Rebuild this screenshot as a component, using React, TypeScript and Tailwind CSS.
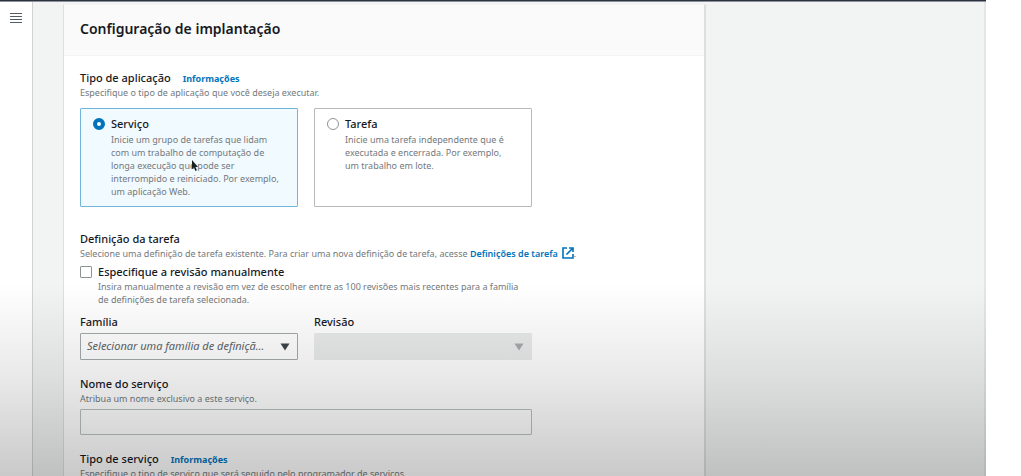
import type { ReactNode } from "react";

function InfoLink() {
  return (
    <a href="#info" className="ml-3 text-[9px] font-bold text-[#0073bb]">
      Informações
    </a>
  );
}

function Heading({ children, info = false }: { children: ReactNode; info?: boolean }) {
  return (
    <div className="h-4 text-[11px] leading-4 font-medium whitespace-nowrap">
      {children}
      {info && <InfoLink />}
    </div>
  );
}

function Description({ children }: { children: ReactNode }) {
  return <p className="text-[9px] leading-[13px] text-[#73797d]">{children}</p>;
}

interface TileProps {
  id: string;
  title: string;
  checked?: boolean;
  children: ReactNode;
}

function Tile({ id, title, checked, children }: TileProps) {
  return (
    <label
      htmlFor={id}
      className="relative flex min-h-[99px] gap-1.5 rounded-[1px] border border-[#b5b9bb] bg-white pt-[7px] pr-4 pb-2 pl-3 has-checked:border-[#72b5d8] has-checked:bg-[#f1faff]"
    >
      <input
        id={id}
        type="radio"
        name="application-type"
        defaultChecked={checked}
        className="mt-0.5 size-3 shrink-0 appearance-none rounded-full border border-[#8d9496] bg-white checked:border-4 checked:border-[#0073bb]"
      />
      <span className="min-w-0">
        <span className="block text-[11px] leading-4 font-medium">{title}</span>
        <span className="mt-px block text-[9px] leading-[13px] text-[#73797d]">{children}</span>
      </span>
      {checked && (
        <svg viewBox="0 0 8 12" className="absolute top-[51px] left-[110px] h-3 w-2" aria-hidden="true">
          <path d="M1 0v9l2-1.6L4.4 11l1.5-.7L4.5 7H7z" fill="#1c2126" />
        </svg>
      )}
    </label>
  );
}

function Caret({ className }: { className: string }) {
  return (
    <svg viewBox="0 0 10 8" className={`pointer-events-none absolute top-[10px] right-2 h-2 w-2.5 ${className}`} aria-hidden="true">
      <path d="M.5.5h9L5 7.5z" fill="currentColor" />
    </svg>
  );
}

export default function App() {
  return (
    <div className="h-screen overflow-hidden bg-white pr-[35px] font-['Noto_Sans','Open_Sans',sans-serif] text-[#16191f]">
      <div className="relative flex h-full flex-col">
        <div className="h-0.5 shrink-0 border-b border-[#8b909c] bg-[#2c333f]" />
        <div className="flex min-h-0 flex-1">
          <aside className="w-[33px] shrink-0 border-r border-[#ced3d4] bg-white pt-2.5 pl-2.5">
            <button type="button" aria-label="Menu" className="flex h-3 w-3 flex-col justify-between py-px">
              <span className="h-px w-full bg-[#545b64]" />
              <span className="h-px w-full bg-[#545b64]" />
              <span className="h-px w-full bg-[#545b64]" />
              <span className="h-px w-full bg-[#545b64]" />
            </button>
          </aside>
          <main className="min-w-0 flex-1 border-r-2 border-[#e3e5e8] bg-[#f2f3f3] pr-[278px] pl-[30px]">
            <section className="mt-0.5 border border-r-2 border-[#dcdfe0] border-t-[#f4f4f4] bg-white">
              <header className="border-b border-[#f4f4f4] bg-[#fafafa] px-4 pt-[13px] pb-[15px]">
                <h1 className="text-[14px] leading-[22px] font-semibold">Configuração de implantação</h1>
              </header>
              <form className="px-4 pt-3.5 pb-4">
                <div className="max-w-[452px]">
                  <Heading info>Tipo de aplicação</Heading>
                  <Description>Especifique o tipo de aplicação que você deseja executar.</Description>
                  <div className="mt-[9px] grid grid-cols-2 gap-4">
                    <Tile id="service" title="Serviço" checked>
                      Inicie um grupo de tarefas que lidam com um trabalho de computação de longa execução que pode ser
                      interrompido e reiniciado. Por exemplo, um aplicação Web.
                    </Tile>
                    <Tile id="task" title="Tarefa">
                      Inicie uma tarefa independente que é executada e encerrada. Por exemplo, um trabalho em lote.
                    </Tile>
                  </div>
                </div>

                <div className="mt-6">
                  <Heading>Definição da tarefa</Heading>
                  <Description>
                    Selecione uma definição de tarefa existente. Para criar uma nova definição de tarefa, acesse{" "}
                    <a href="#task-definitions" className="font-semibold text-[#0073bb]">
                      Definições de tarefa
                      <svg
                        viewBox="0 0 12 12"
                        className="ml-1 inline size-3 align-[-2px]"
                        fill="none"
                        stroke="currentColor"
                        strokeWidth="1.6"
                        aria-hidden="true"
                      >
                        <path d="M5 1H1v10h10V7M7 1h4v4M11 1 4.5 7.5" />
                      </svg>
                    </a>
                    .
                  </Description>
                </div>

                <div className="mt-1 flex max-w-[452px] gap-1.5">
                  <input
                    id="manual-revision"
                    type="checkbox"
                    className="mt-0.5 size-3 shrink-0 appearance-none rounded-[1px] border border-[#8d9496] bg-white checked:bg-[#0073bb]"
                  />
                  <label htmlFor="manual-revision" className="pr-1">
                    <span className="block text-[11px] leading-4 font-medium">Especifique a revisão manualmente</span>
                    <span className="block text-[9px] leading-[13px] text-[#73797d]">
                      Insira manualmente a revisão em vez de escolher entre as 100 revisões mais recentes para a família
                      de definições de tarefa selecionada.
                    </span>
                  </label>
                </div>

                <div className="mt-2 grid max-w-[452px] grid-cols-2 gap-4">
                  <div>
                    <label htmlFor="family" className="block text-[11px] leading-4 font-medium">
                      Família
                    </label>
                    <div className="relative mt-[3px]">
                      <select
                        id="family"
                        className="block h-[27px] w-full appearance-none overflow-hidden rounded-[1px] border border-[#a3a9ab] bg-white pr-7 pl-1.5 text-[11px] text-ellipsis text-[#5c6369] italic"
                      >
                        <option>Selecionar uma família de definição de tarefa</option>
                      </select>
                      <Caret className="text-[#3e444b]" />
                    </div>
                  </div>
                  <div>
                    <label htmlFor="revision" className="block text-[11px] leading-4 font-medium">
                      Revisão
                    </label>
                    <div className="relative mt-[3px]">
                      <select
                        id="revision"
                        disabled
                        className="block h-[27px] w-full appearance-none rounded-[1px] bg-[#e9eaea] pr-7 pl-1.5 text-[11px] opacity-100"
                      />
                      <Caret className="text-[#a5abad]" />
                    </div>
                  </div>
                </div>

                <div className="mt-4 max-w-[452px]">
                  <label htmlFor="service-name" className="block text-[11px] leading-4 font-medium">
                    Nome do serviço
                  </label>
                  <Description>Atribua um nome exclusivo a este serviço.</Description>
                  <input
                    id="service-name"
                    type="text"
                    className="mt-1 block h-[26px] w-full rounded-[1px] border border-[#b9bfc0] bg-white px-1.5 text-[11px]"
                  />
                </div>

                <div className="mt-4">
                  <Heading info>Tipo de serviço</Heading>
                  <Description>Especifique o tipo de serviço que será seguido pelo programador de serviços.</Description>
                </div>
              </form>
            </section>
          </main>
        </div>
        <div className="pointer-events-none absolute inset-x-0 bottom-0 h-48 bg-linear-to-t from-black/21 via-black/9 to-transparent" />
      </div>
    </div>
  );
}
